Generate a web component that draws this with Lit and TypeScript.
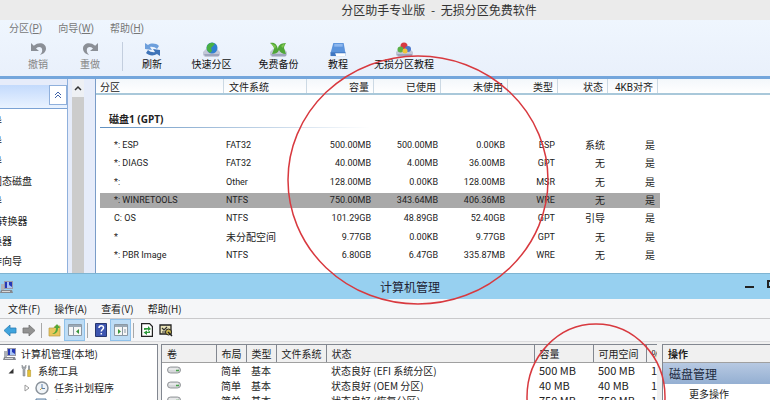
import { LitElement, html, css, svg } from "lit";
import { customElement } from "lit/decorators.js";
import { classMap } from "lit/directives/class-map.js";

const icon = (w: number, h: number, body: unknown) =>
  html`<svg width=${w} height=${h} viewBox="0 0 ${w} ${h}" aria-hidden="true">${body}</svg>`;

const undoShape = svg`<path d="M1 1v8h8l-3-2.6c3-2.4 6.200-1.400 6.200 1.800 0 2-1 3.600-2.400 4.800 3.600-.8 6.200-3 6.200-6.400C16 1.200 9-.8 3.800 3.800z" fill="#8b8f96"/>`;
const disk = svg`<path d="M1 10l3-3h11l3 3v3l-2 2H3l-2-2z" fill="#c3c8d8"/><path d="M2 12h15v2H3z" fill="#9ea5bd"/>`;

const icons = {
  undo: icon(17, 15, undoShape),
  redo: icon(17, 15, svg`<g transform="translate(17 0) scale(-1 1)">${undoShape}</g>`),
  refresh: icon(17, 15, svg`<path d="M1 1l3 2c3-2 8-2 11 1l-2 3C11 5 8 4.500 6 5l2 3-7-1z" fill="#6d9fdc"/><path d="M16 14l-3-2c-3 2-8 2-11-1l2-3c2 2 5 2.500 7 2L9 7l7 1z" fill="#3f74b8"/>`),
  quick: icon(19, 15, svg`${disk}<circle cx="10" cy="6" r="5.500" fill="#2f7fd0"/><path d="M5 4c2-4 6-4 8-2L9 6l1 3-2 2C5 9 4 7 5 4z" fill="#49b043"/>`),
  backup: icon(19, 15, svg`${disk}<path d="M1 1c5-1 7 2 8 6 0-3 2-6 8-6-1 2-2 3-2 5l2 6c-4 0-6-2-7-4-1 3-4 4-7 4l2-5C5 4 3 3 1 1z" fill="#4fa637"/><path d="M2 1l5 3-1 3zM12 4l4-3-2 5z" fill="#7fc64e"/>`),
  book: icon(18, 16, svg`<path d="M4 1h11l2 11H1z" fill="#5c94dc"/><path d="M5 2h9v3H5z" fill="#8db7ee"/><path d="M1 11h16v4H1z" fill="#3f76c2"/><path d="M6 12h11v3H7z" fill="#fff"/>`),
  course: icon(19, 15, svg`${disk}<circle cx="9" cy="4" r="3.500" fill="#d83a42"/><circle cx="5.500" cy="7.500" r="3" fill="#5ab046"/><circle cx="13" cy="7" r="3" fill="#4b78cc"/><circle cx="10" cy="9" r="2.500" fill="#f0c53c"/>`),
  computer: icon(14, 14, svg`<path d="M1 4h3v7H1z" fill="#aeb2b8"/><path d="M4 1h9v8H4z" fill="#9a9aa8"/><path d="M5 2h7v6H5z" fill="#2438b8"/><path d="M7 2h2v3l3 2v1H7z" fill="#a9c4f4"/><path d="M1 10h11l1 3H0z" fill="#85888e"/><path d="M2 11h8v1H2z" fill="#d8d8d8"/>`),
  back: icon(14, 13, svg`<path d="M1 6.500L7 1v3h6v5H7v3z" fill="#3fa4de" stroke="#2c7fb4" stroke-width=".8"/>`),
  forward: icon(14, 13, svg`<path d="M13 6.500L7 1v3H1v5h6v3z" fill="#929292" stroke="#747474" stroke-width=".8"/>`),
  folder: icon(14, 14, svg`<path d="M1 5h5l1-2h5v10H1z" fill="#e8c65c" stroke="#b99a45" stroke-width=".7"/><path d="M4 11c3-1 4-3 4-6H6l3-4 3 4h-2c0 4-2 6-6 6z" fill="#51a83a"/>`),
  leftPane: icon(14, 12, svg`<path d="M.5.500h13v11H.5z" fill="#f6f6f6" stroke="#8b98a4"/><path d="M1 1h12v2H1z" fill="#9aa8b5"/><path d="M5.500 3v8" stroke="#8b98a4"/><path d="M11 5v5L8 7.500z" fill="#38963b"/>`),
  rightPane: icon(14, 12, svg`<path d="M.5.500h13v11H.5z" fill="#f6f6f6" stroke="#8b98a4"/><path d="M1 1h12v2H1z" fill="#9aa8b5"/><path d="M8.500 3v8" stroke="#8b98a4"/><path d="M4 5v5l3-2.500z" fill="#38963b"/><path d="M10 6h2M10 8h2" stroke="#8b98a4"/>`),
  help: icon(12, 14, svg`<path d="M.5.500h11v13H.5z" fill="#3d55b0" stroke="#27366f"/><path d="M4 5c0-3 4.500-3 4.500-.3C8.500 6.500 6.300 6.500 6.300 8.500M6.300 10v1.600" fill="none" stroke="#fff" stroke-width="1.500"/>`),
  reload: icon(12, 14, svg`<path d="M.6.600h8l2.800 3v9.800H.6z" fill="#fff" stroke="#222" stroke-width="1.200"/><path d="M3 7V5h4V3l3 3-3 2V6.500M9 8v2H6v2L2.500 9.500 6 7.500V9" fill="#2e9a3c"/>`),
  settings: icon(14, 13, svg`<path d="M1 1h11v9H1z" fill="#e9e3b8" stroke="#222" stroke-width="1.300"/><path d="M3 4l2 2 3-3M3 8h4" stroke="#333" fill="none" stroke-width="1.200"/><circle cx="9.500" cy="8" r="3" fill="#c8b44c" stroke="#222"/><path d="M9 8l4 4" stroke="#222" stroke-width="1.500"/>`),
  tools: icon(12, 13, svg`<path d="M2 1v3l1 1v7h2V5l1-1V1L5 3H3z" fill="#a9adb2" stroke="#74787c" stroke-width=".5"/><path d="M9 1l1 1v4H8V2z" fill="#9aa0a6"/><path d="M7.600 6h3v6.500h-3z" fill="#e6c237" stroke="#a98c20" stroke-width=".5"/>`),
  clock: icon(14, 14, svg`<circle cx="7" cy="7" r="6" fill="#f0f4f8" stroke="#8c949c" stroke-width="1.500"/><path d="M7 3v4.500h3" fill="none" stroke="#5a7fa8"/><path d="M7 7L5 9" stroke="#c9a24a"/>`),
  event: icon(12, 13, svg`<path d="M1 1h10v11H1z" fill="#dbe7f2" stroke="#5d7fa0"/><path d="M3 4h6M3 7h6" stroke="#4478b0"/>`),
  open: icon(6, 6, svg`<path d="M5.500.500v5H.5z" fill="#333"/>`),
  closed: icon(6, 8, svg`<path d="M1 1l4 3-4 3z" fill="#fff" stroke="#999"/>`),
  volume: icon(14, 8, svg`<rect x=".5" y="1" width="13" height="6" rx="3" fill="#d6d8da" stroke="#7f8386" stroke-width=".8"/><path d="M2 3h9" stroke="#f8f8f8"/><path d="M9 4.500h3" stroke="#46a14b" stroke-width="1.500"/>`),
};

const sharedText = css`
  button { font: inherit; color: inherit; background: none; border: 0; padding: 0; margin: 0; }
  ul { list-style: none; margin: 0; padding: 0; }
  svg { display: block; flex: none; }
  table { border-collapse: collapse; }
  th, td { padding: 0; font-weight: 400; text-align: left; white-space: nowrap; }
`;

@customElement("partition-window")
class PartitionWindow extends LitElement {
  static styles = [sharedText, css`
    :host { display: block; font: 10px/14px Roboto, "Noto Sans CJK SC", sans-serif; color: #222; }
    h1 { margin: 0; height: 20px; padding-left: 108px; background: #ebebeb; text-align: center; font: 12px/20px "Noto Sans CJK SC", sans-serif; color: #333; }
    h1 span { padding: 0 3px; }
    .bars { background: linear-gradient(#eff6fe, #e9f0fb); border-bottom: 3px solid #74a6dc; height: 56px; }
    .menu { display: flex; gap: 16px; padding: 2px 9px 0; color: #777; line-height: 13px; }
    .tools { display: flex; padding-left: 12px; margin-top: 7px; }
    .tool { display: flex; flex-direction: column; align-items: center; width: 52px; color: #111; line-height: 14px; gap: 1px; white-space: nowrap; }
    .tool svg { height: 15px; }
    .tool:disabled { color: #888; }
    .tool.wide { width: 67px; }
    .tool.wide:last-child { width: 80px; }
    .rule { width: 1px; height: 29px; background: #c3cede; margin: 0 3px 0 6px; }
    .main { display: grid; grid-template-columns: 96px 1fr; height: 194px; background: #fff; }
    .side { display: grid; grid-template-columns: 68px 1fr; background: #e6ecfa; border-right: 1px solid #7a9cc8; overflow: hidden; }
    .panel { background: #fff; border-right: 1px solid #8fb0dc; overflow: hidden; }
    .top { display: flex; justify-content: flex-end; height: 23px; background: linear-gradient(#c3dafc, #eaf3ff); border-top: 6px solid #e6ecfa; border-bottom: 1px solid #7ba2d4; }
    .top button { width: 18px; height: 20px; display: grid; place-items: center; background: #fff; border: 1px solid #8fb0dc; }
    .panel ul { margin: 3px 0 0 -8px; line-height: 20px; }
    .scroll { width: 12px; margin-left: 4px; background: #cccccc; }
    .scroll button { width: 12px; height: 18px; background: #eef0f4; display: grid; place-items: center; }
    table, thead, tbody { display: block; }
    thead tr { background: linear-gradient(#f3f7fb, #fff); border-bottom: 2px solid #a9c8da; height: 14px; }
    tr { display: grid; grid-template-columns: 128px 83px 67px 67px 67px 50px 50px 50px; }
    thead th { border-right: 1px solid #ccd9e4; padding: 0 4px; line-height: 18px; color: #222; height: 14px; }
    thead th:nth-child(2) { padding-left: 5px; }
    th:nth-child(n + 3), td:nth-child(n + 3) { text-align: right; }
    .group tr { display: block; margin: 16px 4px 10px; }
    .group th { display: block; width: 260px; font: bold 10px/16px "Open Sans", "Noto Sans CJK SC", sans-serif; padding-left: 9px; border-bottom: 1px solid; border-image: linear-gradient(90deg, #5f8fc0, #5f8fc000) 1; }
    .rows { display: flex; flex-direction: column; justify-content: space-between; height: 125px; }
    .rows tr { margin-left: 4px; width: 560px; grid-template-columns: 126px 81px 64px 67px 67px 50px 50px 50px; line-height: 15px; height: 15px; font-size: 9px; }
    .rows td:first-child { padding-left: 14px; }
    .rows td.cjk { font-size: 10px; }
    .rows tr.picked { background: #a9a9a9; }
  `];

  private tools = [
    ["undo", "撤销", false, true], ["redo", "重做", false, true], ["refresh", "刷新", false, false],
    ["quick", "快速分区", true, false], ["backup", "免费备份", true, false],
    ["book", "教程", false, false], ["course", "无损分区教程", true, false],
  ] as [keyof typeof icons, string, boolean, boolean][];

  private rows = [
    ["*: ESP", "FAT32", "500.00MB", "500.00MB", "0.00KB", "ESP", "系统", "是"],
    ["*: DIAGS", "FAT32", "40.00MB", "4.00MB", "36.00MB", "GPT", "无", "是"],
    ["*:", "Other", "128.00MB", "0.00KB", "128.00MB", "MSR", "无", "是"],
    ["*: WINRETOOLS", "NTFS", "750.00MB", "343.64MB", "406.36MB", "WRE", "无", "是"],
    ["C: OS", "NTFS", "101.29GB", "48.89GB", "52.40GB", "GPT", "引导", "是"],
    ["*", "未分配空间", "9.77GB", "0.00KB", "9.77GB", "GPT", "无", "是"],
    ["*: PBR Image", "NTFS", "6.80GB", "6.47GB", "335.87MB", "WRE", "无", "是"],
  ];

  render() {
    return html`
      <h1>分区助手专业版<span> - </span>无损分区免费软件</h1>
      <div class="bars">
        <nav class="menu">
          <button>分区(<u>P</u>)</button><button>向导(<u>W</u>)</button><button>帮助(<u>H</u>)</button>
        </nav>
        <div class="tools">
          ${this.tools.map(([name, label, wide, off], i) => html`
            ${i === 2 ? html`<span class="rule"></span>` : ""}
            <button class=${classMap({ tool: true, wide })} ?disabled=${off}>${icons[name]}${label}</button>`)}
        </div>
      </div>
      <div class="main">
        <aside class="side">
          <div class="panel">
            <div class="top"><button aria-label="Collapse">${icon(8, 8, svg`<path d="M1 4l3-3 3 3M1 7l3-3 3 3" fill="none" stroke="#3f62a8"/>`)}</button></div>
            <ul>${["导", "导", "导", "固态磁盘", "导", "2转换器", "换器", "作向导"].map((t) => html`<li>${t}</li>`)}</ul>
          </div>
          <div class="scroll"><button aria-label="Scroll up">${icon(8, 6, svg`<path d="M1 5l3-3 3 3" fill="none" stroke="#333" stroke-width="1.500"/>`)}</button></div>
        </aside>
        <table>
          <thead><tr>${["分区", "文件系统", "容量", "已使用", "未使用", "类型", "状态", "4KB对齐"].map((t) => html`<th scope="col">${t}</th>`)}</tr></thead>
          <tbody class="group"><tr><th scope="rowgroup">磁盘1 (GPT)</th></tr></tbody>
          <tbody class="rows">
            ${this.rows.map((r, i) => html`<tr class=${classMap({ picked: i === 3 })}>${r.map((c) => html`<td class=${classMap({ cjk: c.charCodeAt(0) > 255 })}>${c}</td>`)}</tr>`)}
          </tbody>
        </table>
      </div>`;
  }
}

@customElement("management-window")
class ManagementWindow extends LitElement {
  static styles = [sharedText, css`
    :host { display: block; font: 10px/16px "Noto Sans CJK SC", sans-serif; color: #222; background: #f0f0f0; }
    .title { display: flex; align-items: center; height: 26px; box-sizing: border-box; background: #97d0f0; border-top: 1px solid #7fb4d2; }
    h2 { flex: 1; margin: 0; padding-left: 36px; text-align: center; font: 12px/24px "Noto Sans CJK SC", sans-serif; color: #223; }
    .controls { display: flex; gap: 13px; width: 25px; margin-left: -25px; overflow: hidden; margin-bottom: 6px; align-items: flex-end; }
    .title h2 { margin-right: 0; }
    .min { flex: none; width: 9px; height: 2px; background: #222; }
    .max { flex: none; width: 10px; height: 8px; box-sizing: border-box; border: 2px solid #222; }
    .menu { display: flex; gap: 14px; padding: 0 8px; height: 19px; line-height: 20px; background: #f5f6f8; border-bottom: 1px solid #c9c9cb; }
    .tools { display: flex; align-items: center; gap: 5px; height: 22px; padding-left: 3px; background: #f5f6f8; border-bottom: 1px solid #dcdcde; }
    .tools button { display: grid; place-items: center; height: 20px; min-width: 14px; }
    .tools .on { width: 19px; background: #bddcf5; outline: 1px solid #8fc1ea; margin: 0 -2px; }
    .rule { width: 1px; height: 15px; background: #a8a8a8; margin-right: 1px; }
    .panes { display: grid; grid-template-columns: 158px minmax(0, 1fr) 108px; gap: 3px; margin-top: 2px; }
    .tree, .list { background: #fff; border-top: 1px solid #828790; border-right: 1px solid #828790; overflow: hidden; }
    .list { border-left: 1px solid #828790; border-right: 0; margin-right: 2px; }
    .tree li { display: flex; align-items: center; gap: 4px; height: 17px; padding-left: 3px; }
    .tree .l2 { padding-left: 8px; gap: 6px; }
    .tree .l3 { padding-left: 24px; gap: 5px; }
    table { table-layout: fixed; width: 497px; line-height: 15px; }
    th, td { padding-left: 5px; overflow: hidden; }
    th { height: 17px; background: #f0f0f0; border-right: 1px solid #828790; border-bottom: 1px solid #a0a0a0; box-sizing: border-box; }
    td { height: 15px; }
    .num { font-size: 11px; }
    .w54 { width: 54px; } .w30 { width: 30px; } .w50 { width: 50px; } .w208 { width: 208px; } .w59 { width: 59px; } .w53 { width: 53px; }
    .actions { background: #fff; border-left: 1px solid #828790; border-top: 1px solid #828790; }
    h3 { margin: 0; padding-left: 5px; font: bold 10px/17px "Noto Sans CJK SC", sans-serif; background: #f0f0f0; border-bottom: 1px solid #a0a0a0; }
    h4 { margin: 0; padding-left: 6px; font: 12px/21px "Noto Sans CJK SC", sans-serif; background: linear-gradient(#b7c9e2, #94afd2); color: #1e2b40; }
    .more { display: block; padding-left: 26px; line-height: 20px; color: inherit; text-decoration: none; }
  `];

  private columns = [["卷", "w54"], ["布局", "w30"], ["类型", "w30"], ["文件系统", "w50"], ["状态", "w208"], ["容量", "w59"], ["可用空间", "w53"], ["%", ""]];
  private volumes = [["EFI 系统分区", "500 MB"], ["OEM 分区", "40 MB"], ["恢复分区", "750 MB"]];

  render() {
    return html`
      <div class="title">${icons.computer}<h2>计算机管理</h2>
        <div class="controls"><button class="min" aria-label="Minimize"></button><button class="max" aria-label="Maximize"></button></div>
      </div>
      <nav class="menu">${["文件(F)", "操作(A)", "查看(V)", "帮助(H)"].map((t) => html`<button>${t}</button>`)}</nav>
      <div class="tools">
        <button aria-label="Back">${icons.back}</button><button aria-label="Forward">${icons.forward}</button>
        <span class="rule"></span>
        <button aria-label="Up">${icons.folder}</button><button class="on" aria-label="Tree pane">${icons.leftPane}</button>
        <span class="rule"></span>
        <button aria-label="Help">${icons.help}</button><button class="on" aria-label="Action pane">${icons.rightPane}</button>
        <span class="rule"></span>
        <button aria-label="Refresh">${icons.reload}</button><button aria-label="Settings">${icons.settings}</button>
      </div>
      <div class="panes">
        <ul class="tree">
          <li>${icons.computer}计算机管理(本地)</li>
          <li class="l2">${icons.open}${icons.tools}系统工具</li>
          <li class="l3">${icons.closed}${icons.clock}任务计划程序</li>
          <li class="l3">${icons.closed}${icons.event}事件查看器</li>
        </ul>
        <div class="list">
          <table>
            <thead><tr>${this.columns.map(([t, w]) => html`<th scope="col" class=${w}>${t}</th>`)}</tr></thead>
            <tbody>${this.volumes.map(([kind, size]) => html`<tr>
              <td>${icons.volume}</td><td>简单</td><td>基本</td><td></td><td>状态良好 (${kind})</td>
              <td class="num">${size}</td><td class="num">${size}</td><td class="num">10</td></tr>`)}</tbody>
          </table>
        </div>
        <div class="actions"><h3>操作</h3><h4>磁盘管理</h4><a class="more" href="#more">更多操作</a></div>
      </div>`;
  }
}

@customElement("app-root")
class AppRoot extends LitElement {
  static styles = css`
    :host { display: block; position: relative; height: 100vh; overflow: hidden; background: #fff; }
    .marks { position: absolute; top: 0; left: 0; pointer-events: none; }
  `;
  render() {
    return html`
      <partition-window></partition-window>
      <management-window></management-window>
      <svg class="marks" width="770" height="480" fill="none" stroke="#d8393f" stroke-width="1.500" aria-hidden="true">
        <ellipse cx="418" cy="180" rx="130" ry="124"/>
        <ellipse cx="596" cy="397" rx="69" ry="73"/>
      </svg>`;
  }
}
